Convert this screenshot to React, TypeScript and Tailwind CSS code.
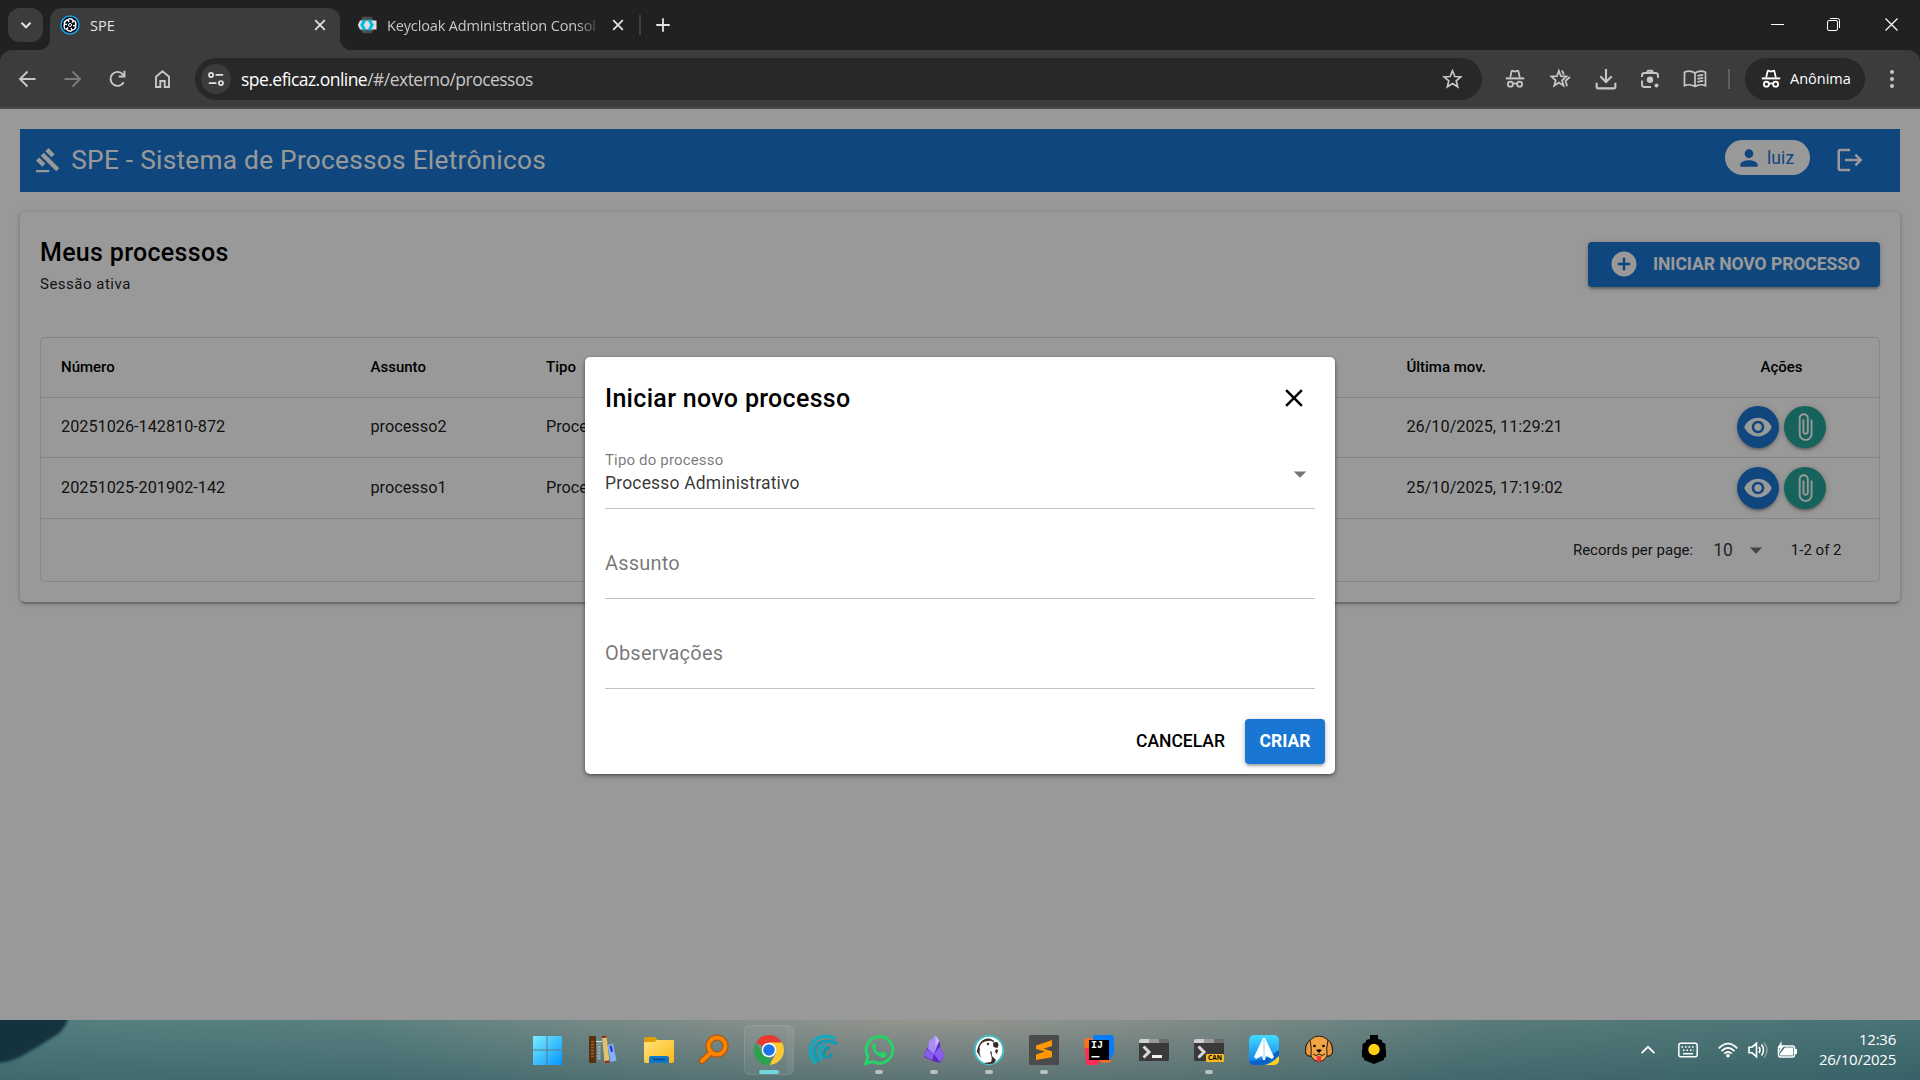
import React from 'react';
import {
  MdAddCircle,
  MdArrowDropDown,
  MdAttachFile,
  MdClose,
  MdGavel,
  MdLogout,
  MdPerson,
  MdVisibility,
} from 'react-icons/md';

const UI_FONT = "font-['Open_Sans',sans-serif]";
const APP_FONT = "font-['Roboto',sans-serif]";

/* ---------- browser icons ---------- */

function StrokeIcon({ children, size = 20, w = 1.9, className = '' }: { children: React.ReactNode; size?: number; w?: number; className?: string }) {
  return (
    <svg width={size} height={size} viewBox="0 0 20 20" fill="none" stroke="currentColor" strokeWidth={w} className={className}>
      {children}
    </svg>
  );
}

function Incognito({ className = '' }: { className?: string }) {
  return (
    <svg width="20" height="20" viewBox="0 0 20 20" fill="none" stroke="currentColor" strokeWidth="1.8" className={className}>
      <path d="M5.200 8.400 6.600 2.400Q6.900 1.500 7.800 1.800L10 2.500l2.200-.7q.9-.3 1.200.6l1.400 6" />
      <path strokeWidth="2" d="M.8 9.400h18.400" />
      <circle cx="5.400" cy="15.200" r="2.500" />
      <circle cx="14.600" cy="15.200" r="2.500" />
      <path d="M7.800 14.800q2.200-1 4.400 0" />
    </svg>
  );
}

function QuasarLogo() {
  return (
    <svg width="20" height="20" viewBox="0 0 20 20">
      <circle cx="10" cy="10" r="9" fill="#050a14" stroke="#12a5e4" strokeWidth="1.500" />
      <g fill="none" stroke="#fff" strokeWidth="1.400">
        <circle cx="10" cy="10" r="1.500" strokeWidth="1" />
        {[0, 60, 120, 180, 240, 300].map((a) => (
          <path key={a} d="M8.500 3.800q3.500-.4 5.200 2l-1.800 1.800" transform={`rotate(${a} 10 10)`} />
        ))}
      </g>
    </svg>
  );
}

function KeycloakLogo() {
  return (
    <svg width="20" height="20" viewBox="0 0 20 20">
      <path d="M5.500 1.800h9L19 10l-4.500 8.200h-9L1 10z" fill="#4d4d4d" />
      <path d="M3 5.500h16.500v9H3L.8 10z" fill="#dedede" />
      <path d="M9 5 6.200 10 9 15H6.500L3.600 10l2.900-5zM11 5h2.500l2.900 5-2.900 5H11l2.800-5z" fill="#00b8e3" stroke="#00b8e3" strokeWidth=".8" />
    </svg>
  );
}

function TitleBar() {
  return (
    <div className={`flex h-[50px] bg-[#202221] text-[#e3e3e3] ${UI_FONT}`}>
      <div className="flex w-[50px] pt-2 pl-2">
        <div className="flex h-[34px] w-[35px] items-center justify-center rounded-xl bg-[#3c3c3c]">
          <StrokeIcon size={18} w={2.300}><path d="M5 7.500l5 5 5-5" /></StrokeIcon>
        </div>
      </div>
      <div className="relative mt-2 flex h-[42px] w-[290px] items-center rounded-t-xl bg-[#3c3c3c] pr-3 pb-2 pl-[10px] before:absolute before:bottom-0 before:-left-3 before:size-3 before:bg-[radial-gradient(circle_at_0_0,transparent_12px,#3c3c3c_12.500px)] before:content-[''] after:absolute after:-right-3 after:bottom-0 after:size-3 after:bg-[radial-gradient(circle_at_100%_0,transparent_12px,#3c3c3c_12.500px)] after:content-['']">
        <QuasarLogo />
        <span className="mt-[1px] ml-[10px] flex-1 text-[14.500px] leading-5">SPE</span>
        <StrokeIcon size={16} w={2.200}><path d="M4 4l12 12M16 4L4 16" /></StrokeIcon>
      </div>
      <div className="mt-2 flex h-[34px] w-[301px] items-center pl-[17px]">
        <KeycloakLogo />
        <span className="mt-[1px] ml-[10px] w-[208px] text-[14.500px] leading-5 tracking-[-0.140px] whitespace-nowrap text-[#c7c7c7] [mask-image:linear-gradient(90deg,#000_91%,transparent_103%)]">Keycloak Administration Consol</span>
        <StrokeIcon size={16} w={2.200} className="ml-[15px]"><path d="M4 4l12 12M16 4L4 16" /></StrokeIcon>
        <div className="ml-auto h-5 w-[2px] bg-[#3f4040]" />
      </div>
      <StrokeIcon size={18} w={2} className="mt-4 ml-[13px]"><path d="M10 2.500v15M2.500 10h15" /></StrokeIcon>
      <div className="ml-auto flex items-center pr-[22px] pb-[2px] text-white">
        <div className="h-[1px] w-[13px] bg-white" />
        <svg width="13" height="13" viewBox="0 0 13 13" fill="none" stroke="currentColor" className="ml-[43px]">
          <rect x=".5" y="2.500" width="10" height="10" rx="1.500" />
          <path d="M3 .5h7.500q2 0 2 2V10" />
        </svg>
        <svg width="13" height="13" viewBox="0 0 13 13" stroke="currentColor" strokeWidth="1.200" className="ml-[45px]">
          <path d="M.5.5l12 12M12.500.5l-12 12" />
        </svg>
      </div>
    </div>
  );
}

function AddressBar() {
  return (
    <div className="bg-[#202221]">
      <div className="flex h-[59px] items-center rounded-t-xl border-b-2 border-[#484848] bg-[#3c3c3c] text-[#c7c7c7]">
        <div className="flex w-[195px] gap-[25px] pl-[17px]">
          <StrokeIcon><path d="M18.500 10H3M10.500 2.500L3 10l7.500 7.500" /></StrokeIcon>
          <StrokeIcon className="text-[#7b7b7b]"><path d="M2.500 10h15M10.500 2.500l7.500 7.500-7.500 7.500" /></StrokeIcon>
          <StrokeIcon><path d="M16.700 13.200A7 7 0 1 1 15.900 5.400L17.500 7.200M17.500 1.800v5.700h-5.800" /></StrokeIcon>
          <StrokeIcon><path d="M4 18V7.800L10.500 2.300l6.500 5.500V18h-4.300v-6H8.300v6z" /></StrokeIcon>
        </div>
        <div className="flex h-[42px] w-[1287px] items-center rounded-full bg-[#282828] pr-5 pl-[6px]">
          <div className="flex size-[30px] items-center justify-center rounded-full bg-[#3c3c3c] text-[#e3e3e3]">
            <StrokeIcon size={18} w={1.900}><circle cx="4.500" cy="5.500" r="2.300" /><path d="M9.500 5.500H18M2 14.500h8.500" /><circle cx="15.500" cy="14.500" r="2.300" /></StrokeIcon>
          </div>
          <span className={`mt-[1px] ml-[10px] flex-1 text-[17.500px] leading-6 tracking-[-0.530px] whitespace-nowrap text-[#c7c7c7] ${UI_FONT}`}>
            <span className="text-white">spe.eficaz.online</span>/#/externo/processos
          </span>
          <StrokeIcon w={1.700}><path d="M10.500 1.800l2.300 5.700 6.100.4-4.700 3.900 1.500 6-5.200-3.300-5.200 3.300 1.500-6-4.700-3.900 6.100-.4z" /></StrokeIcon>
        </div>
        <div className="flex items-center pl-[23px]">
          <Incognito />
          <StrokeIcon size={22} w={1.600} className="ml-6"><path d="M9 2.500l1.800 5 5 .3-3.900 3.300 1.300 5L9 13.300l-4.200 2.800 1.300-5-3.900-3.300 5-.3zM11.800 2.200l1.700 3.800M19 8.200l-3.900 3.500 1.300 4.800" /></StrokeIcon>
          <StrokeIcon size={22} w={1.900} className="ml-6"><path d="M10 1v11.500M4.800 7.500L10 12.700l5.200-5.200M1.500 13.500v4q0 1 1 1h15q1 0 1-1v-4" /></StrokeIcon>
          <StrokeIcon className="ml-[23px]"><path d="M2 8V6.500A2.500 2.500 0 0 1 4.500 4h11A2.500 2.500 0 0 1 18 6.500V9M2 11.500v4A2.500 2.500 0 0 0 4.500 18H11M7 3l1-1.200h4L13 3" /><circle cx="10" cy="10.800" r="3.200" fill="currentColor" stroke="none" /><circle cx="16.500" cy="16.500" r="2" fill="currentColor" stroke="none" /></StrokeIcon>
          <svg width="24" height="20" viewBox="0 0 24 20" fill="none" stroke="currentColor" strokeWidth="1.700" className="ml-[23px]">
            <path d="M12 4Q7 .8 1.500 3.200v13.500Q7 14.500 12 17.500q5-3 10.500-.8V3.200Q17 .8 12 4v13.500M14.500 7q3-1.300 5.700-.8M14.500 10q3-1.300 5.700-.8M14.500 13q3-1.300 5.700-.8" />
          </svg>
          <div className="ml-[21px] h-5 w-[2px] bg-[#606060]" />
          <div className="ml-[15px] flex h-[42px] w-[120px] items-center rounded-full bg-[#282828] pl-4 text-white">
            <Incognito />
            <span className={`ml-[9px] text-[14.500px] leading-5 ${UI_FONT}`}>Anônima</span>
          </div>
          <div className="ml-[25px] flex flex-col gap-[3px]">
            <i className="size-1 rounded-full bg-current" /><i className="size-1 rounded-full bg-current" /><i className="size-1 rounded-full bg-current" />
          </div>
        </div>
      </div>
    </div>
  );
}

/* ---------- application ---------- */

const RAISED = 'shadow-[0_1px_6px_rgba(0,0,0,0.2),0_2px_3px_rgba(0,0,0,0.14),0_4px_1px_-2px_rgba(0,0,0,0.12)]';
const GRID = 'grid grid-cols-[309.5px_175.5px_860.4px_1fr] items-center';

const rows = [
  { number: '20251026-142810-872', subject: 'processo2', type: 'Proces', date: '26/10/2025, 11:29:21' },
  { number: '20251025-201902-142', subject: 'processo1', type: 'Proces', date: '25/10/2025, 17:19:02' },
];

function ProcessTable() {
  return (
    <div className="mt-[42px] h-[245px] rounded-[5px] border border-black/12">
      <div className={`${GRID} h-[60px] border-b border-black/12 pl-5 text-[15px] font-medium`}>
        <span>Número</span>
        <span>Assunto</span>
        <span>Tipo</span>
        <div className="flex"><span className="flex-1">Última mov.</span><span className="w-[195px] text-center">Ações</span></div>
      </div>
      {rows.map((r, i) => (
        <div key={r.number} className={`${GRID} ${i ? 'h-[61px]' : 'h-[60px]'} border-b border-black/12 pl-5 text-[16.250px] text-black/90`}>
          <span>{r.number}</span>
          <span>{r.subject}</span>
          <span>{r.type}</span>
          <div className="flex items-center">
            <span className="flex-1">{r.date}</span>
            <div className={`flex w-[195px] justify-center gap-[5px] text-white ${i ? '' : '-mt-[2px]'}`}>
              <div className={`flex size-[42px] items-center justify-center rounded-full bg-[#1976d2] ${RAISED}`}><MdVisibility size={30} /></div>
              <div className={`flex size-[42px] items-center justify-center rounded-full bg-[#26a69a] ${RAISED}`}><MdAttachFile size={30} /></div>
            </div>
          </div>
        </div>
      ))}
      <div className="flex h-[62px] items-center justify-end pr-[37.500px] text-[15px] text-black/90">
        <span>Records per page:</span>
        <span className="ml-[20px] text-[17.500px] text-black/80">10</span>
        <MdArrowDropDown size={30} className="ml-2 text-black/54" />
        <span className="ml-5">1-2 of 2</span>
      </div>
    </div>
  );
}

function Field({ label, value }: { label: string; value?: string }) {
  return (
    <div className="flex h-[70px] items-center justify-between border-b border-black/24">
      {value ? (
        <div className="flex flex-col pb-[3px]">
          <span className="text-[15px] leading-[22px] tracking-[0.160px] text-black/55">{label}</span>
          <span className="text-[17.500px] leading-[25px] tracking-[0.180px] text-black/80">{value}</span>
        </div>
      ) : (
        <span className="pb-[2px] text-[20px] tracking-[0.190px] text-black/55">{label}</span>
      )}
      {value && <MdArrowDropDown size={30} className="text-black/54" />}
    </div>
  );
}

function NewProcessDialog() {
  return (
    <div className="absolute inset-0 flex items-start justify-center bg-black/40 pt-[248px]">
      <div className="flex h-[417px] w-[750px] flex-col rounded-[5px] bg-white shadow-[0_2px_5px_rgba(0,0,0,0.3),0_1px_3px_rgba(0,0,0,0.3)]">
        <div className="flex h-[82px] items-center justify-between px-5">
          <h2 className="pt-[2px] text-[25px] leading-10 font-medium tracking-[0.310px]">Iniciar novo processo</h2>
          <MdClose size={30} className="mr-[6px]" />
        </div>
        <div className="flex flex-col gap-5 px-5">
          <Field label="Tipo do processo" value="Processo Administrativo" />
          <Field label="Assunto" />
          <Field label="Observações" />
        </div>
        <div className="mt-auto flex justify-end gap-[5px] p-[10px] text-[17.500px] font-medium">
          <button className="h-[45px] px-[15px]">CANCELAR</button>
          <button className={`h-[45px] w-20 rounded-[4px] bg-[#1976d2] font-bold text-white ${RAISED}`}>CRIAR</button>
        </div>
      </div>
    </div>
  );
}

function Application() {
  return (
    <main className={`relative h-[911px] bg-white p-5 text-black ${APP_FONT}`}>
      <header className="flex h-[63px] items-center bg-[#1976d2] pr-[35px] pl-[15px] text-white">
        <MdGavel size={26.25} className="-mt-[1px]" />
        <h1 className="ml-[10px] flex-1 text-[26.250px] tracking-[0.260px]">SPE - Sistema de Processos Eletrônicos</h1>
        <div className="mb-[6px] flex h-[35px] w-[85px] items-center rounded-full bg-white pl-[11px] text-[#1976d2]">
          <MdPerson size={26} />
          <span className="mt-[1px] ml-[5px] text-[17.500px] tracking-[0.100px]">luiz</span>
        </div>
        <MdLogout size={30} className="-mt-[2px] ml-[25px]" />
      </header>
      <section className="mt-5 h-[390px] rounded-[5px] p-5 shadow-[0_1px_6px_rgba(0,0,0,0.2),0_2px_3px_rgba(0,0,0,0.14),0_4px_1px_-2px_rgba(0,0,0,0.12)]">
        <div className="flex h-[63px] justify-between">
          <div>
            <h2 className="pt-[1px] text-[25px] leading-10 font-medium tracking-[0.310px]">Meus processos</h2>
            <p className="-mt-[1px] text-[15px] leading-[25px] tracking-[0.500px] text-black/90">Sessão ativa</p>
          </div>
          <button className={`mt-[10px] flex h-[45px] w-[292px] items-center rounded-[4px] bg-[#1976d2] pl-[20.500px] text-[17.500px] font-bold text-white ${RAISED}`}>
            <MdAddCircle size={30} className="-mt-[1px]" />
            <span className="ml-[14.500px] tracking-[-0.050px] whitespace-nowrap">INICIAR NOVO PROCESSO</span>
          </button>
        </div>
        <ProcessTable />
      </section>
      <NewProcessDialog />
    </main>
  );
}

/* ---------- taskbar ---------- */

const Svg = ({ children }: { children: React.ReactNode }) => (
  <svg width="32" height="32" viewBox="0 0 32 32" className="overflow-visible">{children}</svg>
);

const WindowsLogo = () => (
  <Svg>
    <defs>
      <linearGradient id="win" x1="0" y1="0" x2="32" y2="32" gradientUnits="userSpaceOnUse"><stop stopColor="#84f2ff" /><stop offset="1" stopColor="#0093ff" /></linearGradient>
    </defs>
    <path transform="translate(-2 0)" fill="url(#win)" d="M2 2h13.500v13.500H2zM16.500 2H31v13.500H16.500zM2 16.500h13.500V31H2zM16.500 16.500H31V31H16.500z" />
  </Svg>
);
const Books = () => (
  <Svg>
    <g transform="translate(-2 0)">
      <path fill="#59300f" d="M3 2h7v27H3z" /><path fill="#9a602c" d="M5 7h3v16H5z" />
      <path stroke="#3a1a08" d="M5 9h3M5 12h3M5 15h3M5 18h3M5 21h3" />
      <path fill="#789193" d="M11 7h4v19h-4z" /><path stroke="#d8e0df" d="M10 7.500h6" /><path stroke="#b0bdbd" strokeDasharray="2 1" d="M13 12v13" />
      <path fill="#e2c16e" d="M16 2l4.500-.5 3 26.500-5 .5z" /><path fill="#8c2119" d="M16 2l4.500-.5.2 2-4.500.4zM18.700 27l4.700-.5.1 2-4.600.4z" />
      <path fill="#86aefb" d="M21.500 11l5.500-1.500 3.500 17-6 1.500z" /><path fill="#1d33c4" d="M23.500 12l2-.5 1.500 6-2 .5z" />
    </g>
  </Svg>
);
const Folder = () => (
  <Svg>
    <defs><linearGradient id="fold" x1="0" y1="0" x2="1" y2="1"><stop stopColor="#ffe27a" /><stop offset="1" stopColor="#fcb917" /></linearGradient></defs>
    <path fill="#e19d05" d="M1 5q0-2 2-2h8q1 0 2 1l2 2v5H1z" />
    <path fill="url(#fold)" d="M1 8h10l3-2h16q1 0 1 1v20q0 2-2 2H3q-2 0-2-2z" />
    <path fill="#0b78c9" d="M6 29v-5q0-2 2-2h16q2 0 2 2v5z" /><path stroke="#07477f" strokeWidth="1.500" d="M10 25.500h12" />
  </Svg>
);
const Search = () => (
  <Svg>
    <g fill="none" strokeLinecap="round"><g stroke="#a7560a" strokeWidth="6"><circle cx="19" cy="12" r="8.500" /><path d="M12.500 19L4 27" /></g><g stroke="#ff8201" strokeWidth="4"><circle cx="19" cy="12" r="8.500" /><path d="M12.500 19L4 27" /></g></g>
  </Svg>
);
const Chrome = () => (
  <Svg>
    <path fill="#e33b2e" d="M16 16L3 8.500A15 15 0 0 1 29 8.500z" /><path fill="#2ba24c" d="M16 16l2 15A15 15 0 0 1 3 8.500L9.500 19.500z" /><path fill="#fcc934" d="M16 8.500h13A15 15 0 0 1 16.500 31L23 19.500z" />
    <circle cx="16" cy="16" r="7.300" fill="#fff" /><circle cx="16" cy="16" r="5.800" fill="#1a73e8" />
  </Svg>
);
const Swirl = () => (
  <Svg>
    <g fill="none" strokeWidth="3.200">
      <path stroke="#12a9c0" d="M8 29.500C-1 21 1 8 11 3.500q9-3 16 1" />
      <path stroke="#0f9db5" d="M11.500 27.500C3 20 6 10 15 7.500q8-1.500 14.500 2.500" />
      <path stroke="#12a9c0" d="M15.500 25C8.500 19 11 12.500 18 11.500" />
      <path stroke="#1495aa" d="M17 24C13.500 18 18 13.500 22 14M20 24l4-4" />
    </g>
  </Svg>
);
const WhatsApp = () => (
  <Svg>
    <path fill="none" stroke="#25d366" strokeWidth="3" d="M2.800 29.500l2-7.200A13.300 13.300 0 1 1 10 27.500z" />
    <path fill="#25d366" d="M11.200 9q-3 2.200-1.800 5.500 2.500 6.800 9.200 9 4 .8 5.100-3.200v-1.100l-4-1.900-1.900 2q-4.300-1.500-5.900-5.300l1.500-1.900L11.900 9z" />
  </Svg>
);
const Obsidian = () => (
  <Svg>
    <path fill="#5a2bb8" d="M8 16L17.500 2l4 4.500.8 7 4 8L22 29l-7-2-9-4z" /><path fill="#a88bf6" d="M11 7l6.500-5.500 4 5L16 20l-6-5z" /><path fill="#c9b7fc" d="M17.500 1.500l4 5-4 6.500z" /><path fill="#8b5cf0" d="M16 20l6-7.500 4.300 9-4.300 6.500zM6 22l3-7 7 5-2 6z" />
  </Svg>
);
const DBeaver = () => (
  <Svg>
    <circle cx="16" cy="16" r="14.300" fill="#fff" stroke="#45bcc4" strokeWidth="2" />
    <path fill="none" stroke="#382923" strokeWidth="1.500" d="M4.500 18C6 10 8 8 12 6.500q5-2 9 1" />
    <path fill="#382923" d="M8 8q4-5 11-3l-4 2q-4 0-7 1zM4 18l3-5-.5 6 1.500 5zM20 9q5-2.500 5.500 2l-1 3-4-1zM17 18l1.500-1 .5 5 4 4-2 3q-5 2-10 0l7-1q2-3-1-10zM23 15l2 1-1 4-2-2z" />
    <circle cx="15" cy="10" r="1.200" fill="#382923" />
  </Svg>
);
const Sublime = () => (
  <Svg>
    <rect x="1" y="1" width="30" height="30" rx="1.500" fill="#4b4b4b" /><path fill="#ff9800" d="M8 11.500L24 6v6l-8.500 2.700 8.500 2.500v6L8 26v-5.500l9-3-9-2.500z" />
  </Svg>
);
const IntelliJ = () => (
  <div className="relative size-8">
    <Svg><path fill="#087cfa" d="M11 1h17q3 0 3 3v15l-5 8L8 8z" /><path fill="#fe6e1a" d="M1 5l9-1v22h18v2l-8 1L2 21z" /><path fill="#ff2d55" d="M2 14h10l6 12-4 5H5q-2 0-2-3z" /><path d="M6 6h20v20H6z" /><path fill="#fff" d="M8.500 22h8v1.500h-8z" /></Svg>
    <span className="absolute top-[7px] left-[8px] font-['Liberation_Mono',monospace] text-[10px] leading-[10px] font-bold text-white">IJ</span>
  </div>
);
const TerminalArt = ({ cursor = true }: { cursor?: boolean }) => (
  <Svg>
    <rect x="1" y="5" width="30" height="22" rx="1.500" fill="#3a3a3a" /><path fill="#cfcfcf" d="M1 9V6.500Q1 5 2.500 5H11v4z" /><path fill="#999" d="M11 5h10v4H11z" /><path fill="#6b6b6b" d="M21 5h8.500Q31 5 31 6.500V9H21z" /><path fill="none" stroke="#d8d8d8" strokeWidth="3" d="M5.500 12.500l5.500 5.500-5.500 5.500" />
    {cursor && <path fill="#f0f0f0" d="M14 21h10v3H14z" />}
  </Svg>
);
const Terminal = () => <TerminalArt />;
const Canary = () => (
  <div className="relative size-8">
    <TerminalArt cursor={false} />
    <span className="absolute top-[20px] left-[13px] flex h-2 w-[18px] items-center justify-center rounded-[1px] bg-[#fdbb1c] font-['Open_Sans',sans-serif] text-[6.500px] leading-none font-bold text-black">CAN</span>
  </div>
);
const Spark = () => (
  <Svg>
    <defs>
      <linearGradient id="sp" x1="0" y1="0" x2="0" y2="1"><stop stopColor="#43dcff" /><stop offset="1" stopColor="#0a78e6" /></linearGradient>
      <clipPath id="spc"><rect x="1" y="1" width="30" height="30" rx="5" /></clipPath>
    </defs>
    <g clipPath="url(#spc)"><path fill="url(#sp)" d="M1 1h30v30H1z" /><path fill="#0862c8" d="M1 27q17 0 30-11v6Q20 31 12 31H1z" /><path fill="#ffd21c" d="M17 31q8-2 14-9v9z" /></g>
    <path fill="#fff" d="M15 4l-9 19 2 2 6-3 1 4h2l1-4 6 3 2-2L17 4z" /><path stroke="#9ad0ee" d="M16 6v18" />
  </Svg>
);
const Dog = () => (
  <Svg>
    <g stroke="#2a1a12" strokeWidth="1"><path fill="#f2a444" d="M7 6q9-8 18 0 5 4 4.500 12-1 5-5.500 4-2 5-8 6-6-1-8-6-4.500 1-5.500-4Q2 10 7 6z" /><path fill="#e39a40" d="M7 6q-4.500 3-4.500 12 1 4.500 5.500 4 1-8-1-16zM25 6q4.500 3 4.500 12-1 4.500-5.500 4-1-8 1-16z" /></g>
    <circle cx="11.500" cy="12" r="1.300" /><circle cx="20.500" cy="12" r="1.300" /><path d="M13 16q3-1.500 6 0l-3 3z" /><path fill="none" stroke="#2a1a12" d="M10 20q3 3 6 0 3 3 6 0" /><path fill="#f0383e" d="M13.800 22h4.400v4.500q-2.200 4-4.400 0z" />
  </Svg>
);
const Lamp = () => (
  <Svg>
    <path d="M12 1h8v4l4 1v2l3.500 2v5l.5 1v7l-2 1v2l-5 2-5 2-5-2-5-2v-2l-2-1v-7l.5-1v-5L8 8V6l4-1z" /><circle cx="16" cy="15.500" r="5.700" fill="#ffcf12" />
  </Svg>
);

const apps: { Icon: React.FC; active?: boolean; open?: boolean }[] = [
  { Icon: WindowsLogo }, { Icon: Books }, { Icon: Folder }, { Icon: Search },
  { Icon: Chrome, active: true }, { Icon: Swirl }, { Icon: WhatsApp, open: true }, { Icon: Obsidian, open: true },
  { Icon: DBeaver, open: true }, { Icon: Sublime, open: true }, { Icon: IntelliJ }, { Icon: Terminal },
  { Icon: Canary, open: true }, { Icon: Spark }, { Icon: Dog }, { Icon: Lamp },
];

function Taskbar() {
  return (
    <footer className="relative flex h-[60px] items-center overflow-hidden bg-[linear-gradient(180deg,rgba(255,255,255,0.02),rgba(25,70,82,0.32)),radial-gradient(ellipse_560px_120px_at_930px_0,#94938c,transparent),linear-gradient(90deg,#4f7b7b,#5f8080_40%,#647f7d_60%,#447072)] text-white">
      <svg width="76" height="50" viewBox="0 0 76 50" className="absolute top-0 left-0 overflow-visible blur-[1.500px]"><path d="M-6-6h76q-4 14-12 20Q40 26 20 37 8 43-6 43z" fill="#15333f" /></svg>
      <div className="ml-[521px] flex">
        {apps.map(({ Icon, active, open }, i) => (
          <div key={i} className="relative flex h-[60px] w-[55px] items-center justify-center pl-[1px]">
            {active && <div className="absolute top-[5px] left-[3px] h-[50px] w-[50px] rounded-md border border-white/10 bg-white/6 shadow-[inset_-6px_0_0_rgba(255,255,255,0.04)]" />}
            <div className="relative"><Icon /></div>
            {active && <div className="absolute bottom-[6px] h-1 w-5 rounded-full bg-[#71d7dc]" />}
            {open && <div className="absolute bottom-[6px] h-1 w-2 rounded-full bg-[#b9c2c1]" />}
          </div>
        ))}
      </div>
      <div className="ml-auto flex items-center pr-[24px]">
        <StrokeIcon size={16} w={2.200}><path d="M2 14l8-8 8 8" /></StrokeIcon>
        <svg width="20" height="16" viewBox="0 0 20 16" fill="none" stroke="currentColor" strokeWidth="1.500" className="ml-[22px]"><rect x=".8" y="1.300" width="18.400" height="13.400" rx="2" /><path strokeDasharray="1.600 1.900" d="M3.500 5h13M5 8.300h11" /><path d="M5 11.700h10" /></svg>
        <svg width="20" height="16" viewBox="0 0 20 16" fill="none" stroke="currentColor" strokeWidth="1.800" className="ml-5"><path d="M.8 6.300Q10-3 19.200 6.300M3.600 9q6.400-6.300 12.800 0M6.300 11.700q3.700-3.500 7.400 0" /><circle cx="10" cy="13.800" r="1.800" fill="currentColor" stroke="none" /></svg>
        <svg width="20" height="18" viewBox="0 0 20 18" fill="none" stroke="currentColor" strokeWidth="1.600" className="ml-[10px]"><path d="M1 6.200h3L8.500 2.300v13.400L4 11.800H1zM11 6q2 3 0 6M13.500 3.500q4 5.500 0 11" /><path opacity=".35" d="M16 1.500q6 7.500 0 15" /></svg>
        <svg width="21" height="18" viewBox="0 0 21 18" className="ml-[9px]"><rect x="1.500" y="5" width="16" height="11" rx="2" fill="none" stroke="currentColor" strokeWidth="1.500" /><path fill="currentColor" d="M8 6.500h8v8H3v-2zM18 8h2v5h-2zM4.500 0L.5 7H3l-1 5 5-7H4.500z" /></svg>
        <div className={`ml-[18px] w-[80px] pb-[3px] text-right text-[15px] leading-5 tracking-[-0.250px] ${UI_FONT}`}>
          <div>12:36</div>
          <div>26/10/2025</div>
        </div>
      </div>
    </footer>
  );
}

export default function App() {
  return (
    <div className="flex h-[1080px] w-[1920px] flex-col overflow-hidden">
      <TitleBar />
      <AddressBar />
      <Application />
      <Taskbar />
    </div>
  );
}
